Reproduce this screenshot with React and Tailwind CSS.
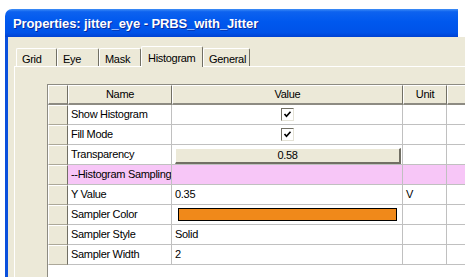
import React from 'react';

const rows = [
  { name: 'Show Histogram', kind: 'check' },
  { name: 'Fill Mode', kind: 'check' },
  { name: 'Transparency', kind: 'button', value: '0.58' },
  { name: '--Histogram Sampling', kind: 'group' },
  { name: 'Y Value', kind: 'text', value: '0.35', unit: 'V' },
  { name: 'Sampler Color', kind: 'color' },
  { name: 'Sampler Style', kind: 'text', value: 'Solid' },
  { name: 'Sampler Width', kind: 'text', value: '2' },
];

const tabs = [
  { label: 'Grid', w: 'w-[41px]' },
  { label: 'Eye', w: 'w-[42px]' },
  { label: 'Mask', w: 'w-[42px]' },
  { label: 'Histogram', w: 'w-[62px]', active: true },
  { label: 'General', w: 'w-[47px]' },
];

function CheckBox() {
  return (
    <span className="w-[13px] h-[13px] bg-white border border-t-[#716f64] border-l-[#716f64] border-r-[#e4e2d6] border-b-[#e4e2d6] flex items-center justify-center">
      <svg width="11" height="11" viewBox="0 0 11 11">
        <polyline points="2.5,5 4.5,7.2 8.5,2.8" fill="none" stroke="#000" strokeWidth="1.7" />
      </svg>
    </span>
  );
}

function RowHeader() {
  return (
    <div className="w-[20px] h-[20px] shrink-0 bg-[#ece9d8] border-t border-l border-white border-r border-r-[#716f64] border-b border-b-[#aca899]" />
  );
}

function ValueCell({ row }) {
  const bg = row.kind === 'group' ? 'bg-[#f7c6f7]' : 'bg-white';
  return (
    <div className={`w-[231px] h-[20px] shrink-0 border-r border-b border-[#c0c0c0] flex items-center ${bg}`}>
      {row.kind === 'check' && (
        <div className="w-full flex justify-center">
          <CheckBox />
        </div>
      )}
      {row.kind === 'button' && (
        <div className="ml-[3px] mr-[1px] mt-[2px] w-full h-[16px] bg-[#ece9d8] border-t border-l border-white border-r-2 border-b-2 border-r-[#716f64] border-b-[#716f64] flex items-center justify-center">
          {row.value}
        </div>
      )}
      {row.kind === 'text' && <span className="pl-[3px]">{row.value}</span>}
      {row.kind === 'color' && (
        <div className="ml-[6px] w-[219px] h-[13px] bg-[#f0891a] border border-black" />
      )}
    </div>
  );
}

export default function App() {
  return (
    <div className="w-[465px] h-[277px] bg-white overflow-hidden font-['Liberation_Sans',sans-serif] text-[11px] tracking-[-0.3px] text-black">
      <div className="ml-[5px] mt-[9px] w-[453px] h-[268px] flex flex-col">
        {/* title bar */}
        <div className="h-[28px] shrink-0 rounded-tl-[7px] bg-[linear-gradient(to_bottom,#3f8ef6_0%,#0d62ef_10%,#0058ee_45%,#0052e8_85%,#0042d2_100%)] flex items-center pl-[8px] pt-px">
          <span className="text-white font-bold text-[13px] tracking-[-0.1px] [text-shadow:1px_1px_0_#0a2a9a]">
            Properties: jitter_eye - PRBS_with_Jitter
          </span>
        </div>

        {/* body */}
        <div className="flex-1 flex">
          <div className="w-[3px] shrink-0 bg-[#0a50dc]" />
          <div className="flex-1 bg-[#ece9d8] flex flex-col">
            {/* tabs */}
            <div className="ml-[8px] mt-[9px] h-[20px] flex items-end">
              {tabs.map((t) =>
                t.active ? (
                  <div
                    key={t.label}
                    className={`${t.w} h-[21px] -mb-px relative z-10 bg-[#ece9d8] rounded-t-[2px] border-t border-l border-white border-r border-r-[#716f64] pl-[6px] pt-[3px]`}
                  >
                    {t.label}
                  </div>
                ) : (
                  <div
                    key={t.label}
                    className={`${t.w} h-[18px] bg-[#ece9d8] rounded-t-[2px] border-t border-l border-white border-r border-r-[#716f64] pl-[5px] pt-[2px]`}
                  >
                    {t.label}
                  </div>
                )
              )}
            </div>

            {/* panel */}
            <div className="ml-[6px] flex-1 border-t border-l border-white pt-[17px] pl-[32px] overflow-hidden">
              <div className="w-[420px] h-full bg-white border-t border-l border-[#8d8b82]">
                {/* header */}
                <div className="flex">
                  <div className="w-[20px] h-[20px] shrink-0 bg-[#ece9d8] border-t border-l border-white border-r border-r-[#716f64] border-b-2 border-b-[#8d8b82]" />
                  <div className="w-[104px] h-[20px] shrink-0 bg-[#ece9d8] border-t border-l border-white border-r border-r-[#716f64] border-b-2 border-b-[#8d8b82] flex items-center justify-center">
                    Name
                  </div>
                  <div className="w-[231px] h-[20px] shrink-0 bg-[#ece9d8] border-t border-l border-white border-r border-r-[#716f64] border-b-2 border-b-[#8d8b82] flex items-center justify-center">
                    Value
                  </div>
                  <div className="w-[44px] h-[20px] shrink-0 bg-[#ece9d8] border-t border-l border-white border-r border-r-[#716f64] border-b-2 border-b-[#8d8b82] flex items-center justify-center">
                    Unit
                  </div>
                  <div className="w-[20px] h-[20px] shrink-0 bg-[#ece9d8] border-t border-l border-white border-r border-r-[#716f64] border-b-2 border-b-[#8d8b82]" />
                </div>

                {rows.map((row) => {
                  const bg = row.kind === 'group' ? 'bg-[#f7c6f7]' : 'bg-white';
                  return (
                    <div key={row.name} className="flex">
                      <RowHeader />
                      <div className={`w-[104px] h-[20px] shrink-0 border-r border-b border-[#c0c0c0] flex items-center pl-[3px] whitespace-nowrap overflow-hidden ${bg}`}>
                        {row.name}
                      </div>
                      <ValueCell row={row} />
                      <div className={`w-[44px] h-[20px] shrink-0 border-r border-b border-[#c0c0c0] flex items-center pl-[3px] ${bg}`}>
                        {row.unit}
                      </div>
                      <div className={`w-[20px] h-[20px] shrink-0 border-b border-[#c0c0c0] ${bg}`} />
                    </div>
                  );
                })}
              </div>
            </div>
          </div>
        </div>
      </div>
    </div>
  );
}
